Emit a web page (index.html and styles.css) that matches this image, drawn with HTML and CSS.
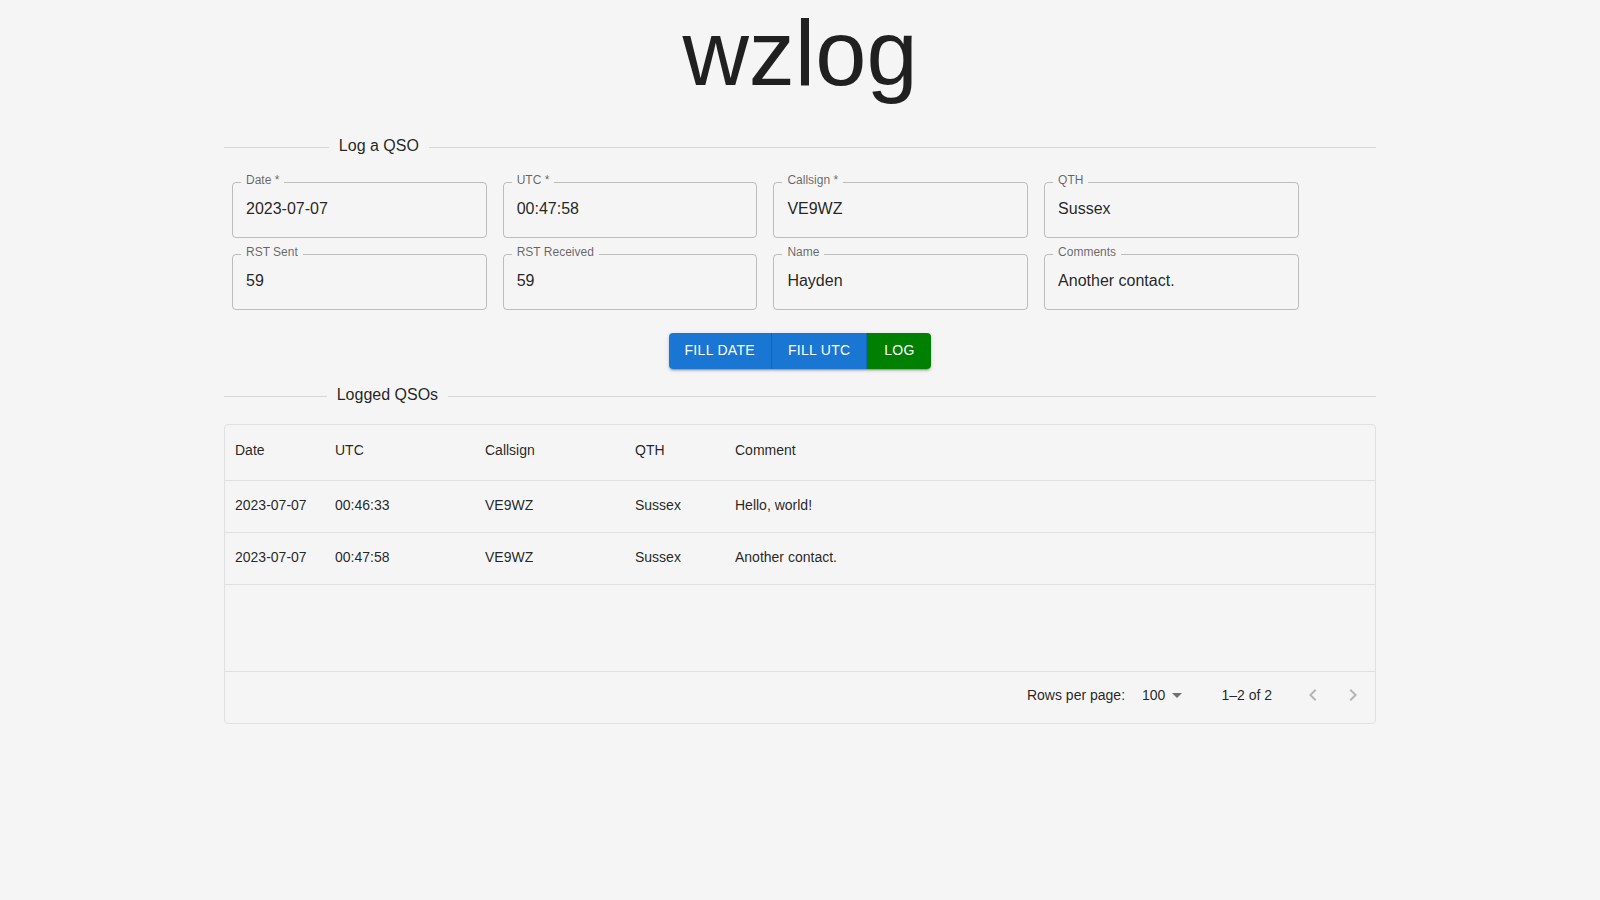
FILE: index.html
```html
<!DOCTYPE html>
<html lang="en">
<head>
<meta charset="utf-8">
<title>wzlog</title>
<link rel="stylesheet" href="styles.css">
</head>
<body>
<div class="container">
  <h1 class="title">wzlog</h1>

  <div class="divider"><span class="divider-text">Log a QSO</span></div>

  <div class="form">
    <div class="field"><span class="label">Date *</span><div class="value">2023-07-07</div></div>
    <div class="field"><span class="label">UTC *</span><div class="value">00:47:58</div></div>
    <div class="field"><span class="label">Callsign *</span><div class="value">VE9WZ</div></div>
    <div class="field"><span class="label">QTH</span><div class="value">Sussex</div></div>
    <div class="field"><span class="label">RST Sent</span><div class="value">59</div></div>
    <div class="field"><span class="label">RST Received</span><div class="value">59</div></div>
    <div class="field"><span class="label">Name</span><div class="value">Hayden</div></div>
    <div class="field"><span class="label">Comments</span><div class="value">Another contact.</div></div>
  </div>

  <div class="actions">
    <div class="btn-group">
      <button class="btn btn-blue">Fill Date</button>
      <button class="btn btn-blue">Fill UTC</button>
      <button class="btn btn-green">Log</button>
    </div>
  </div>

  <div class="divider divider-2"><span class="divider-text">Logged QSOs</span></div>

  <div class="grid">
    <div class="grid-header">
      <div class="cell head">Date</div>
      <div class="cell head">UTC</div>
      <div class="cell head">Callsign</div>
      <div class="cell head">QTH</div>
      <div class="cell head">Comment</div>
    </div>
    <div class="grid-body">
      <div class="grid-row">
        <div class="cell">2023-07-07</div>
        <div class="cell">00:46:33</div>
        <div class="cell">VE9WZ</div>
        <div class="cell">Sussex</div>
        <div class="cell">Hello, world!</div>
      </div>
      <div class="grid-row">
        <div class="cell">2023-07-07</div>
        <div class="cell">00:47:58</div>
        <div class="cell">VE9WZ</div>
        <div class="cell">Sussex</div>
        <div class="cell">Another contact.</div>
      </div>
    </div>
    <div class="grid-footer">
      <span class="pg-label">Rows per page:</span>
      <div class="pg-select">
        <span class="pg-select-value">100</span>
        <svg class="pg-caret" viewBox="0 0 24 24" width="24" height="24"><path d="M7 10l5 5 5-5z"/></svg>
      </div>
      <span class="pg-rows">1–2 of 2</span>
      <div class="pg-actions">
        <span class="pg-btn"><svg viewBox="0 0 24 24" width="24" height="24"><path d="M15.41 16.59 10.83 12l4.58-4.59L14 6l-6 6 6 6 1.41-1.41z"/></svg></span>
        <span class="pg-btn"><svg viewBox="0 0 24 24" width="24" height="24"><path d="M8.59 16.59 13.17 12 8.59 7.41 10 6l6 6-6 6-1.41-1.41z"/></svg></span>
      </div>
    </div>
  </div>
</div>
</body>
</html>
```

FILE: styles.css
```css
* { box-sizing: border-box; }

html, body {
  margin: 0;
  padding: 0;
  background: #f5f5f5;
  color: rgba(0, 0, 0, 0.87);
  font-family: "Liberation Sans", Arial, Helvetica, sans-serif;
}

.container {
  max-width: 1200px;
  margin: 0 auto;
  padding: 0 24px;
}

.title {
  margin: 0;
  text-align: center;
  font-size: 92px;
  line-height: 106px;
  font-weight: 400;
  color: rgba(0, 0, 0, 0.87);
}

.divider {
  display: flex;
  align-items: center;
  margin-top: 29px;
  font-size: 16px;
  line-height: 24px;
}

.divider::before,
.divider::after {
  content: "";
  border-top: 1px solid rgba(0, 0, 0, 0.12);
}

.divider::before { width: 10%; }
.divider::after { width: 90%; }

.divider-text {
  white-space: nowrap;
  padding: 0 9.6px 2px;
  line-height: 22px;
}

.divider-2 { margin-top: 15px; }

.form {
  display: flex;
  flex-wrap: wrap;
  margin-top: 15px;
}

.field {
  position: relative;
  width: 254.7px;
  height: 56px;
  margin: 8px;
  border: 1px solid rgba(0, 0, 0, 0.23);
  border-radius: 4px;
}

.label {
  position: absolute;
  left: 8px;
  top: -10px;
  padding: 0 5px;
  background: #f5f5f5;
  font-size: 12px;
  line-height: 14px;
  color: rgba(0, 0, 0, 0.6);
  white-space: nowrap;
}

.value {
  padding: 13.5px 13px 17.5px;
  font-size: 16px;
  line-height: 23px;
  color: rgba(0, 0, 0, 0.87);
  white-space: nowrap;
}

.actions {
  display: flex;
  justify-content: center;
  margin-top: 15px;
}

.btn-group {
  display: inline-flex;
  border-radius: 4px;
  box-shadow: 0px 3px 1px -2px rgba(0,0,0,0.2), 0px 2px 2px 0px rgba(0,0,0,0.14), 0px 1px 5px 0px rgba(0,0,0,0.12);
}

.btn {
  border: 0;
  margin: 0;
  min-width: 64px;
  padding: 4.5px 16px 7.5px;
  font-family: "Liberation Sans", Arial, Helvetica, sans-serif;
  font-size: 14px;
  font-weight: 500;
  line-height: 24px;
  letter-spacing: 0.3px;
  text-transform: uppercase;
  color: #fff;
}

.btn-blue {
  background: #1976d2;
  border-right: 1px solid #1565c0;
}

.btn-group .btn:first-child { border-radius: 4px 0 0 4px; }
.btn-group .btn:last-child { border-radius: 0 4px 4px 0; }

.btn-green { background: #008000; }

.grid {
  display: flex;
  flex-direction: column;
  height: 300px;
  margin-top: 16px;
  border: 1px solid rgba(224, 224, 224, 1);
  border-radius: 4px;
  font-size: 14px;
  line-height: 20px;
  color: rgba(0, 0, 0, 0.87);
}

.grid-header,
.grid-row {
  display: grid;
  grid-template-columns: 100px 150px 150px 100px 1fr;
}

.grid-header {
  height: 56px;
  border-bottom: 1px solid rgba(224, 224, 224, 1);
}

.grid-row {
  height: 52px;
  border-bottom: 1px solid rgba(224, 224, 224, 1);
}

.grid-body { flex: 1; }

.cell {
  display: flex;
  align-items: center;
  padding: 0 10px 4px;
  white-space: nowrap;
}

.head {
  font-weight: 500;
  padding-bottom: 6px;
}

.grid-footer {
  display: flex;
  justify-content: flex-end;
  align-items: center;
  min-height: 52px;
  padding: 0 2px 6px 0;
  border-top: 1px solid rgba(224, 224, 224, 1);
}

.pg-select {
  position: relative;
  margin: 0 32px 0 9px;
  padding: 0 24px 0 8px;
  height: 24px;
  line-height: 24px;
}

.pg-caret {
  position: absolute;
  right: 0;
  top: 0;
  fill: rgba(0, 0, 0, 0.54);
}

.pg-actions {
  display: flex;
  margin-left: 21px;
}

.pg-btn {
  display: flex;
  padding: 8px;
}

.pg-btn svg { fill: rgba(0, 0, 0, 0.26); }
```
